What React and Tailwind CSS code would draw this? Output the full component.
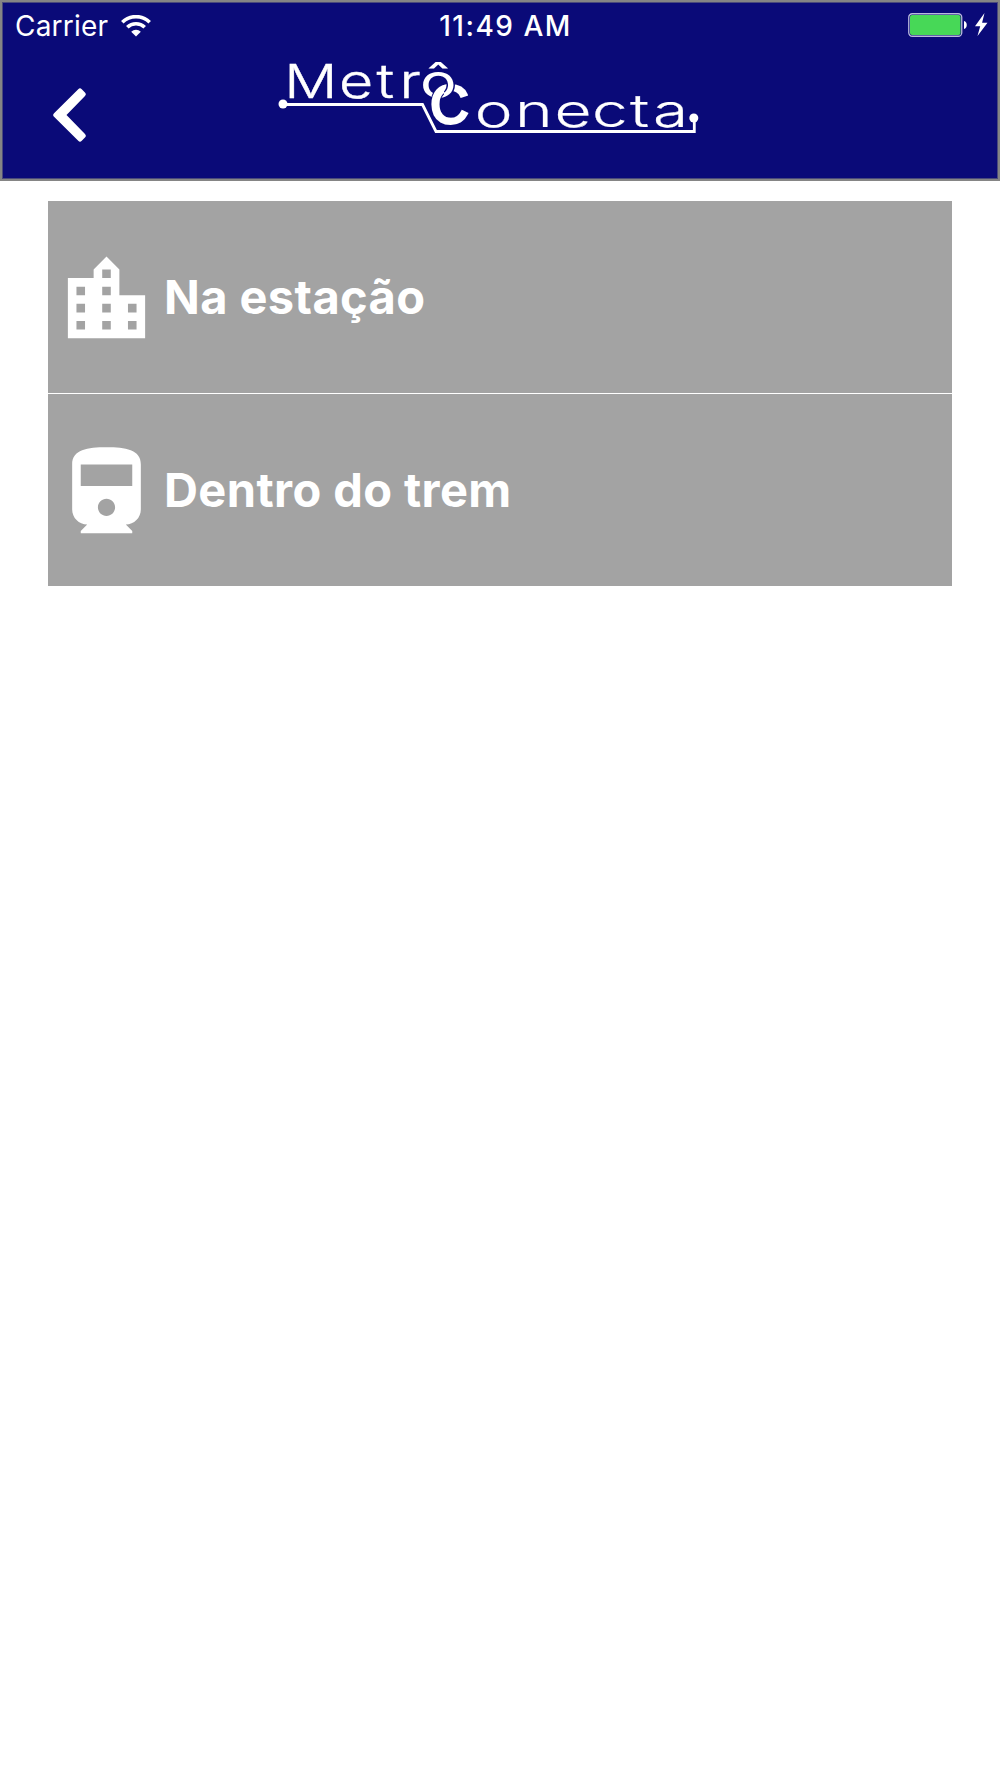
import clsx from 'clsx';

const WifiIcon = () => (
    <svg className="ml-[13px] h-[22px] w-[30px]" viewBox="0 0 30 22" fill="none" stroke="#fff" strokeWidth="3.6">
        <path d="M1.3 7.2a19.6 19.6 0 0 1 27.4 0" />
        <path d="M6.3 12.3a12.4 12.4 0 0 1 17.4 0" />
        <path d="M15 21.5l-4.8-4.8a7 7 0 0 1 9.6 0z" fill="#fff" stroke="none" />
    </svg>
);

const BatteryIcon = () => (
    <svg className="mb-[2px] h-[24px] w-[81px]" viewBox="0 0 81 24">
        <rect x="0.75" y="0.75" width="53" height="22.5" rx="3.5" fill="none" stroke="#b9b9dc" strokeWidth="1.3" />
        <rect x="2" y="2" width="50.5" height="20" rx="2" fill="#47d857" />
        <path d="M56 8c3.7.8 3.7 7.2 0 8z" fill="#fff" />
        <path d="M76.5 0L67 13.2h5.2L69.5 23 79.5 9.7h-5.4z" fill="#fff" />
    </svg>
);

// The "ô" and the "C" are linked like two chain rings: the C passes under on the right, over on the left
const Logo = () => (
    <svg className="h-[90px] w-[440px]" viewBox="270 50 440 90" fill="#fff" fontFamily="Inter, 'Liberation Sans', sans-serif">
        <defs>
            <clipPath id="ring-left">
                <rect x="428" y="88" width="16" height="46" />
            </clipPath>
        </defs>
        <path d="M283 104.5h139.5l13.5 27h258.3V118" fill="none" stroke="#fff" strokeWidth="2.8" />
        <circle cx="283" cy="104" r="4.5" />
        <circle cx="693.8" cy="118" r="4.5" />
        <g stroke="#fff" strokeWidth="3">
            <text id="ring-c" x="430.3" y="123.3" fontSize="53" fontFamily="'Liberation Sans', sans-serif">
                C
            </text>
        </g>
        <text
            transform="translate(0 98) scale(1.27 1)"
            x="223.8 266.9 296.5 314.5 330.7"
            fontSize="46.5"
            fontWeight="300"
            stroke="#fff"
            strokeWidth=".4"
        >
            Metr
            <tspan fontWeight="400" fontSize="48" stroke="#0a0a78" strokeWidth="2.4" paintOrder="stroke">
                ô
            </tspan>
        </text>
        <g clipPath="url(#ring-left)">
            <use href="#ring-c" stroke="#0a0a78" strokeWidth="5" />
            <use href="#ring-c" stroke="#fff" strokeWidth="3" />
        </g>
        <text
            transform="translate(0 127) scale(1.42 1)"
            x="334.3 362.7 390.5 416.9 443.6 459.9"
            fontSize="45"
            fontWeight="300"
            stroke="#fff"
            strokeWidth=".2"
        >
            onecta
        </text>
    </svg>
);

const options = [
    {
        label: 'Na estação',
        offset: 'mt-[5px]',
        path: 'M15 11V5l-3-3-3 3v2H3v14h18V11h-6zm-8 8H5v-2h2v2zm0-4H5v-2h2v2zm0-4H5V9h2v2zm6 8h-2v-2h2v2zm0-4h-2v-2h2v2zm0-4h-2V9h2v2zm0-4h-2V5h2v2zm6 12h-2v-2h2v2zm0-4h-2v-2h2v2z',
    },
    {
        label: 'Dentro do trem',
        offset: 'mt-[10px]',
        path: 'M4 15.5C4 17.43 5.57 19 7.5 19L6 20.5v.5h12v-.5L16.5 19c1.93 0 3.5-1.57 3.5-3.5V5c0-3.5-3.58-4-8-4s-8 .5-8 4v10.5zm8 1.5c-1.1 0-2-.9-2-2s.9-2 2-2 2 .9 2 2-.9 2-2 2zm6-7H6V5h12v5z',
    },
];

const App = () => (
    <div className="min-h-[1778px] bg-white font-['Inter',sans-serif] text-white">
        <header className="h-[181px] border-2 border-[#858585] bg-[#0a0a78] shadow-[inset_0_0_0_1px_#4a4a7c]">
            <div className="grid h-[47px] grid-cols-3 items-center pr-[9px] pl-[13px] text-[28px]">
                <div className="flex items-center">
                    <span className="tracking-[0.2px]">Carrier</span>
                    <WifiIcon />
                </div>
                <span className="pl-[7px] text-center font-medium tracking-[1.5px]">11:49 AM</span>
                <div className="flex justify-end">
                    <BatteryIcon />
                </div>
            </div>
            <div className="flex">
                <button type="button" aria-label="Voltar" className="mt-[39px] ml-[51px] h-[54px] w-[33px]">
                    <svg viewBox="0 0 33 54" className="h-full w-full" fill="#fff" stroke="#fff" strokeWidth="5" strokeLinejoin="round">
                        <path d="M27 3L2.800 27 27 51l3.2-3.2L10 27 30.200 6.200z" />
                    </svg>
                </button>
                <div className="ml-[184px] pt-[1px]">
                    <Logo />
                </div>
            </div>
        </header>

        <ul className="mx-[48px] mt-[20px] divide-y divide-white">
            {options.map(({ label, offset, path }) => (
                <li key={label} className="flex h-[192.5px] items-center bg-[#a3a3a3] pl-[7px]">
                    <svg viewBox="0 0 24 24" fill="currentColor" className={clsx('h-[103px] w-[103px] shrink-0', offset)}>
                        <path d={path} />
                    </svg>
                    <span className="ml-[6px] text-[47px] font-bold tracking-[0.4px]">{label}</span>
                </li>
            ))}
        </ul>
    </div>
);

export default App;
